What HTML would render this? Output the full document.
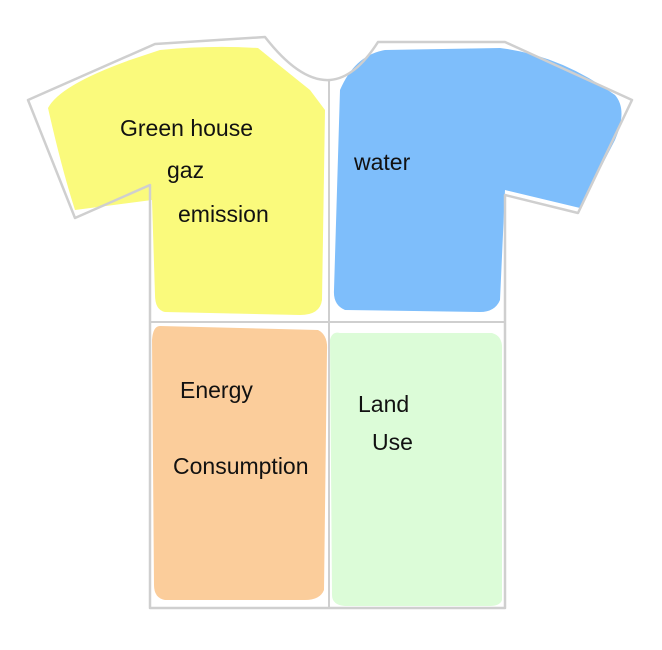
<!DOCTYPE html>
<html><head><style>
html,body{margin:0;padding:0;background:#fff;width:662px;height:650px;overflow:hidden}
svg{display:block}
text{font-family:"Liberation Sans",sans-serif;fill:#111;font-size:23px}
</style></head><body>
<svg width="662" height="650" viewBox="0 0 662 650">
<!-- fills -->
<path d="M48 108 Q60 85 130 60 L160 50 Q210 45 258 48 Q285 70 310 90 L325 110 L322 300 Q320 315 300 315 L165 312 Q155 310 155 295 L152 200 L75 210 Q62 170 48 108 Z" fill="#fafa7c"/>
<path d="M340 90 Q355 55 385 50 L500 48 Q560 55 615 95 Q628 110 615 140 L580 208 L505 190 L500 300 Q495 312 480 312 L345 310 Q333 305 334 290 Z" fill="#7ebefb"/>
<path d="M160 326 L318 330 Q328 335 327 350 L324 590 Q320 600 305 600 L165 600 Q154 598 154 585 L152 340 Q153 326 160 326 Z" fill="#fbcd9b"/>
<path d="M340 333 L492 333 Q503 336 502 350 L502 600 Q500 606 490 606 L345 606 Q332 605 332 595 L330 340 Q332 331 340 333 Z" fill="#dcfcd8"/>
<!-- outline -->
<path d="M155 44 L265 37 Q300 82 330 80 Q355 78 378 42 L505 42 L632 100 L578 213 L505 195 L505 608 L150 608 L150 185 L75 218 L28 100 Z" fill="none" stroke="#cfcfcf" stroke-width="2.5" stroke-linejoin="round"/>
<line x1="329" y1="80" x2="329" y2="608" stroke="#cfcfcf" stroke-width="2"/>
<line x1="150" y1="322" x2="505" y2="322" stroke="#cfcfcf" stroke-width="2"/>
<text x="120" y="136">Green house</text>
<text x="167" y="178">gaz</text>
<text x="178" y="222">emission</text>
<text x="354" y="170">water</text>
<text x="180" y="398">Energy</text>
<text x="173" y="474">Consumption</text>
<text x="358" y="412">Land</text>
<text x="372" y="450">Use</text>
</svg>
</body></html>
